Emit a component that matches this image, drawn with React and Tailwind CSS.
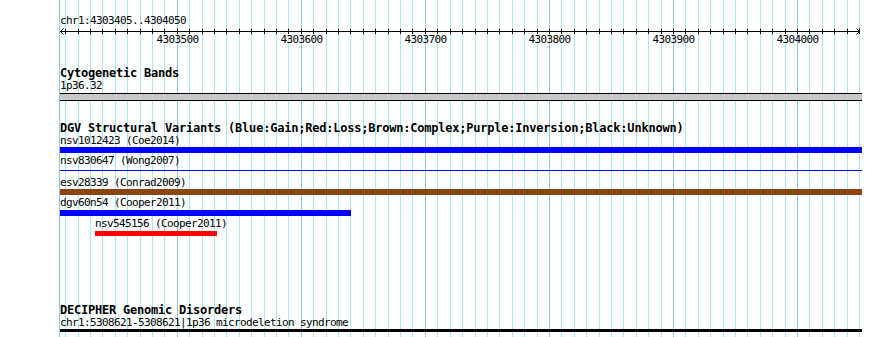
const BP0 = 4303500;
const toX = (p) => 177.3 + (p - BP0) * 1.2405;

const ticks = [];
for (let p = 4303410; p <= 4304050; p += 10) {
  ticks.push({ p, x: Math.floor(toX(p)), major: p % 100 === 0 });
}

function Grid() {
  return (
    <svg className="absolute left-0 top-0" width="890" height="337">
      <rect x="59" y="0" width="1" height="337" fill="#8ec8ec" />
      {ticks.map((t) => (
        <rect
          key={t.p}
          x={t.x}
          y="0"
          width="1"
          height="337"
          fill={t.major ? "#8ec8ec" : "#a8e8ee"}
        />
      ))}
    </svg>
  );
}

function Ruler() {
  return (
    <svg className="block -ml-[60px]" width="890" height="19">
      <line x1="60" y1="4.5" x2="860" y2="4.5" stroke="#000" strokeWidth="1" />
      <polyline points="63.5,1.5 60.5,4.5 63.5,7.5" fill="none" stroke="#000" strokeWidth="1" />
      <polyline points="856.5,1.5 859.5,4.5 856.5,7.5" fill="none" stroke="#000" strokeWidth="1" />
      {ticks.map((t) => (
        <line key={t.p} x1={t.x + 0.5} y1="1.5" x2={t.x + 0.5} y2="7" stroke="#000" strokeWidth="1" />
      ))}
      {ticks
        .filter((t) => t.major)
        .map((t) => (
          <text
            key={t.p}
            x={t.x + 0.5}
            y="16.3"
            textAnchor="middle"
            fontFamily="'DejaVu Sans Mono', monospace"
            fontSize="11"
            letterSpacing="-0.62"
            fill="#000"
          >
            {t.p}
          </text>
        ))}
    </svg>
  );
}

const small = "h-[12px] leading-[12px] text-[11px] tracking-[-0.62px] whitespace-pre";
const bold = "h-[12px] leading-[12px] text-[12px] font-bold tracking-[-0.22px] whitespace-pre";

export default function App() {
  return (
    <div className="relative w-[890px] h-[337px] overflow-hidden bg-white text-black font-['DejaVu_Sans_Mono',monospace]">
      <Grid />
      <div className="relative flex flex-col pl-[60px]">
        <div className={`${small} mt-[15px]`}>chr1:4303405..4304050</div>
        <Ruler />

        <div className={`${bold} mt-[21px]`}>Cytogenetic Bands</div>
        <div className={`${small} mt-[1px]`}>1p36.32</div>
        <div className="mt-[1px] h-[8px] w-[802px] border-y border-black bg-[#c8c8c8]" />

        <div className={`${bold} mt-[21px]`}>
          DGV Structural Variants (Blue:Gain;Red:Loss;Brown:Complex;Purple:Inversion;Black:Unknown)
        </div>
        <div className={`${small} mt-[1px]`}>nsv1012423 (Coe2014)</div>
        <div className="h-[6px] w-[802px] bg-[#0000ff]" />
        <div className={`${small} mt-[2px]`}>nsv830647 (Wong2007)</div>
        <div className="mt-[3px] h-[1px] w-[802px] bg-[#0000ff]" />
        <div className={`${small} mt-[6px]`}>esv28339 (Conrad2009)</div>
        <div className="h-[6px] w-[802px] bg-[#8b4513]" />
        <div className={`${small} mt-[2px]`}>dgv60n54 (Cooper2011)</div>
        <div className="mt-[1px] h-[6px] w-[291px] bg-[#0000ff]" />
        <div className="ml-[35px] flex flex-col">
          <div className={`${small} mt-[2px]`}>nsv545156 (Cooper2011)</div>
          <div className="mt-[1px] h-[5px] w-[122px] bg-[#ff0000]" />
        </div>

        <div className={`${bold} mt-[68px]`}>DECIPHER Genomic Disorders</div>
        <div className={`${small} mt-[1px]`}>chr1:5308621-5308621|1p36 microdeletion syndrome</div>
        <div className="h-[3px] w-[802px] bg-black" />
      </div>
    </div>
  );
}
